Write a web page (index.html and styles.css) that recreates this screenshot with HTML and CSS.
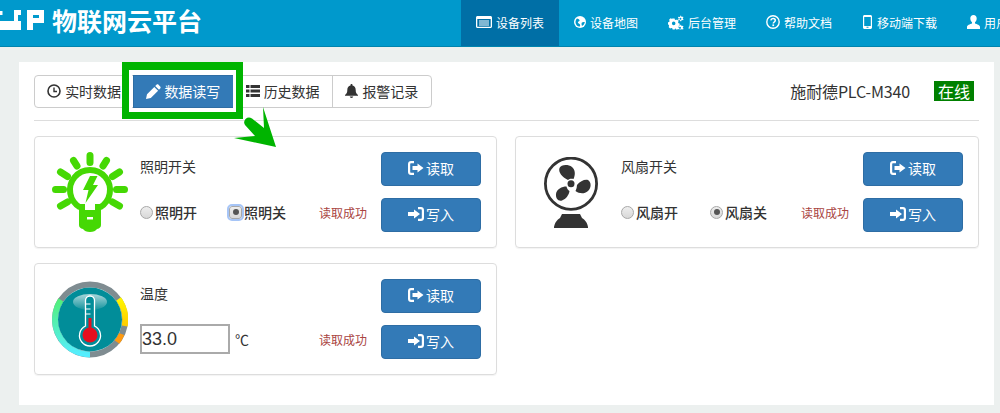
FILE: index.html
```html
<!DOCTYPE html>
<html lang="zh">
<head>
<meta charset="utf-8">
<title>物联网云平台</title>
<link rel="stylesheet" href="styles.css">
</head>
<body>
<svg class="defs" width="0" height="0" aria-hidden="true">
  <symbol id="i-read" viewBox="0 0 16 14"><path d="M6 0H3C1.300 0 0 1.300 0 3v8c0 1.700 1.300 3 3 3h3v-2.200H3.200C2.600 11.800 2.200 11.400 2.200 10.800V3.200C2.200 2.600 2.600 2.200 3.200 2.200H6zM9.500 2.500V5H4.500v4h5v2.500L15.500 7z" fill="currentColor"/></symbol>
  <symbol id="i-write" viewBox="0 0 16 14"><path d="M10 0h3c1.700 0 3 1.300 3 3v8c0 1.700-1.300 3-3 3h-3v-2.200h2.800c.6 0 1-.4 1-1V3.200c0-.6-.4-1-1-1H10zM6 2.500V5H0v4h6v2.500L12 7z" fill="currentColor"/></symbol>
</svg>
<header class="topbar">
  <div class="brand">
    <svg class="logo" width="45" height="20" viewBox="0 0 45 20"><path d="M0 1h2.500v4H0zM14 0h7v5h-3v6h3v9H0v-9h14z" fill="#fff"/><path d="M27 0h17v13H33v7h-6zM33 5v3h6V5z" fill="#fff" fill-rule="evenodd"/></svg>
    <span class="brand-name">物联网云平台</span>
  </div>
  <nav class="nav">
    <a class="nav-item active"><svg width="16" height="12" viewBox="0 0 16 12"><path fill="#fff" fill-rule="evenodd" d="M1.500 0h13C15.300 0 16 .7 16 1.500v9c0 .8-.7 1.500-1.500 1.500h-13C.7 12 0 11.300 0 10.500v-9C0 .7.700 0 1.500 0zM1.300 3v7.700h13.400V3zM3 4.500h10v1H3zM3 6.500h10v1H3zM3 8.500h10v1H3z"/></svg>设备列表</a>
    <a class="nav-item"><svg width="12" height="12" viewBox="0 0 12 12"><circle cx="6" cy="6" r="6" fill="#fff"/><path d="M3 2.500c1 .3 2 .5 2.500 1.500S4.500 5.500 4 6s.5 1.500 1.500 2 .5 2 .5 2.500C4 11 1.700 9 1.500 6.500 1.400 5 2 3.500 3 2.500zM8 6.500c1-.5 2-.5 2.800-.5-.2 1.800-1.300 3.300-2.800 4C7.500 9 7.300 7 8 6.500z" fill="#0099cc"/></svg>设备地图</a>
    <a class="nav-item"><svg width="16" height="15" viewBox="0 0 18 16"><path fill="#fff" fill-rule="evenodd" d="M5 3.500h2.400l.4 1.300 1.200.5 1.200-.6 1.700 1.700-.6 1.200.5 1.200 1.300.4v2.400l-1.300.4-.5 1.200.6 1.200-1.700 1.700-1.200-.6L8 14.600l-.4 1.300H5.200l-.4-1.300-1.200-.5-1.200.6L.7 13l.6-1.200-.5-1.200L0 10.200V7.800l1.300-.4.5-1.200-.6-1.200 1.700-1.700 1.200.6 1.200-.5zM6.400 7a2 2 0 1 0 0 4 2 2 0 0 0 0-4zM14 .2l.7.1.3 1 .8.4 1-.4.6.9-.7.8v.9l.8.7-.6.9-1-.3-.7.4-.3 1.100h-1l-.3-1-.8-.4-1 .4-.5-.9.7-.8v-.9l-.8-.7.6-.9 1 .3.8-.4zM14 2.700a1.100 1.100 0 1 0 0 2.200 1.100 1.100 0 0 0 0-2.200zM14 10.500l.7.1.3 1 .8.4 1-.4.6.9-.7.8v.9l.8.7-.6.9-1-.3-.7.2-.3.3h-1l-.3-.3-.8-.2-1 .1-.5-.7.7-.8v-.9l-.8-.7.6-.9 1 .3.8-.4zM14 13a1.100 1.100 0 1 0 0 2 1.100 1.100 0 0 0 0-2z"/></svg>后台管理</a>
    <a class="nav-item"><svg width="14" height="14" viewBox="0 0 14 14"><circle cx="7" cy="7" r="6.200" fill="none" stroke="#fff" stroke-width="1.400"/><path d="M4.800 5.300C5 4 6 3.400 7.100 3.400c1.300 0 2.200.8 2.200 1.900 0 1.700-2 1.700-2 3.300" fill="none" stroke="#fff" stroke-width="1.500"/><rect x="6.400" y="9.400" width="1.700" height="1.700" fill="#fff"/></svg>帮助文档</a>
    <a class="nav-item"><svg width="11" height="14" viewBox="0 0 9 14"><path fill="#fff" fill-rule="evenodd" d="M1.500 0h6C8.300 0 9 .7 9 1.500v11c0 .8-.7 1.500-1.500 1.500h-6C.7 14 0 13.300 0 12.500v-11C0 .7.700 0 1.500 0zM1.200 2v9h6.600V2zM3.500 11.700v1h2v-1z"/></svg>移动端下载</a>
    <a class="nav-item"><svg width="13" height="14" viewBox="0 0 13 14"><path fill="#fff" d="M6.500 0C8.500 0 9.700 1.500 9.700 3.500c0 1.500-.7 3-1.700 3.700v1.300c2 .8 5 1.300 5 3.500V14H0v-2c0-2.200 3-2.700 5-3.500V7.200C4 6.500 3.300 5 3.300 3.500 3.300 1.500 4.500 0 6.500 0z"/></svg>用户中心</a>
  </nav>
</header>

<main class="page">
  <section class="panel">
    <div class="toolbar">
      <div class="tabs">
        <a class="tab"><svg width="14" height="14" viewBox="0 0 14 14"><circle cx="7" cy="7" r="6" fill="none" stroke="#333" stroke-width="1.600"/><path d="M7 3.500V7.500H10" fill="none" stroke="#333" stroke-width="1.400"/></svg>实时数据</a>
        <a class="tab current"><svg width="15" height="15" viewBox="0 0 15 15"><path fill="#fff" d="M10.500.8c.6-.6 1.500-.6 2 0l1.700 1.700c.6.500.6 1.400 0 2L13 5.800 9.200 2zM8.300 2.900l3.800 3.800-7.300 7.300L0 15l1-4.800z"/></svg>数据读写</a>
        <a class="tab"><svg width="14" height="12" viewBox="0 0 14 12"><path fill="#333" d="M0 0h3.500v3H0zM4.500 0H14v3H4.500zM0 4.500h3.500v3H0zM4.500 4.500H14v3H4.500zM0 9h3.500v3H0zM4.500 9H14v3H4.500z"/></svg>历史数据</a>
        <a class="tab"><svg width="13" height="14" viewBox="0 0 13 14"><path fill="#333" d="M6.500 0c.6 0 1 .4 1 1v.6c2 .5 3.200 2.100 3.200 4.300 0 2.700.7 3.600 2.300 5.100v.8H0V11c1.600-1.500 2.300-2.400 2.300-5.100 0-2.200 1.200-3.800 3.200-4.300V1c0-.6.4-1 1-1zM4.800 12.600h3.400c0 .8-.8 1.400-1.700 1.400s-1.700-.6-1.700-1.400z"/></svg>报警记录</a>
      </div>
      <div class="device">
        <span class="device-name">施耐德PLC-M340</span>
        <span class="badge">在线</span>
      </div>
    </div>

    <div class="cards">
      <article class="card">
        <div class="card-icon">
          <svg width="76" height="80" viewBox="0 0 76 80">
            <g fill="none" stroke="#45d804" stroke-width="7" stroke-linecap="round">
              <path d="M38 3.500v7M21.500 8.500l3.500 5.500M54.500 8.500L51 14M8.500 20l7 4.500M67.500 20l-7 4.500M3.500 37.500h8M72.500 37.500h-8M8.500 54l7-4M67.500 54l-7-4"/>
            </g>
            <path d="M28 55.300A20 20 0 1 1 48 55.300" fill="none" stroke="#45d804" stroke-width="6"/>
            <path fill="#45d804" d="M38 24H45.500L41 33H46L33.500 51 36.500 38H31z"/>
            <path fill="#45d804" fill-rule="evenodd" d="M27 52h6v6h10v-6h6v21q0 3-4 4-2 3-7 3t-7-3q-4-1-4-4zM35 65v2.500h6V65z"/>
          </svg>
        </div>
        <div class="card-body">
          <h3 class="card-title">照明开关</h3>
          <div class="card-row">
            <label class="radio"><span class="dot"></span>照明开</label>
            <label class="radio"><span class="dot on focus"></span>照明关</label>
            <span class="status">读取成功</span>
          </div>
        </div>
        <div class="actions">
          <button class="btn"><svg width="16" height="14"><use href="#i-read"/></svg><span>读取</span></button>
          <button class="btn"><svg width="16" height="14"><use href="#i-write"/></svg><span>写入</span></button>
        </div>
      </article>

      <article class="card">
        <div class="card-icon">
          <svg width="54" height="71" viewBox="0 0 54 71">
            <circle cx="27" cy="26.700" r="25.600" fill="none" stroke="#333" stroke-width="2.800"/>
            <circle cx="27" cy="26.700" r="3.500" fill="#333"/>
            <path fill="#333" d="M24 23C18 20 14 15 15.500 11 17 7.500 24 7 28 10c3.500 3 3.500 8 1.500 12-2-.5-4-.5-5.500 1zM33 28c3-4 8-6 11-5 3.500 2 3.500 8 0 11-4 3.500-9 2.500-12.500 0 1-2 1.500-4 1.500-6zM22.500 29.500c.5 2 1.500 3.500 3 4.500-.5 4-3.500 8-7.500 9.500-4 1-6.500-2.500-6-6.500.5-5 6-7.500 10.500-7.500z"/>
            <path fill="#333" d="M18 57H36L38 61C41 63 43 65 44 70V71H10V70C11 65 13 63 16 61z"/>
          </svg>
        </div>
        <div class="card-body">
          <h3 class="card-title">风扇开关</h3>
          <div class="card-row">
            <label class="radio"><span class="dot"></span>风扇开</label>
            <label class="radio"><span class="dot on"></span>风扇关</label>
            <span class="status">读取成功</span>
          </div>
        </div>
        <div class="actions">
          <button class="btn"><svg width="16" height="14"><use href="#i-read"/></svg><span>读取</span></button>
          <button class="btn"><svg width="16" height="14"><use href="#i-write"/></svg><span>写入</span></button>
        </div>
      </article>

      <article class="card">
        <div class="card-icon">
          <svg width="76" height="77" viewBox="0 0 76 77">
            <defs>
              <linearGradient id="g-left" x1="0" y1="0" x2="0" y2="1"><stop offset="0" stop-color="#52f07a"/><stop offset="1" stop-color="#55eeff"/></linearGradient>
              <linearGradient id="g-right" x1="0" y1="0" x2="0" y2="1"><stop offset="0" stop-color="#fff600"/><stop offset="1" stop-color="#ffcc00"/></linearGradient>
              <linearGradient id="g-sheen" x1="0" y1="0" x2="0" y2="1"><stop offset="0" stop-color="#a9d6da"/><stop offset="1" stop-color="#12939d"/></linearGradient>
            </defs>
            <circle cx="38" cy="38.500" r="35" fill="none" stroke="#7f8c91" stroke-width="6"/>
            <path d="M9 19A35 35 0 0 0 38 73.500" fill="none" stroke="url(#g-left)" stroke-width="6"/>
            <path d="M66.500 18a35 35 0 0 1 6.200 27" fill="none" stroke="url(#g-right)" stroke-width="6"/>
            <path d="M69.500 53a35 35 0 0 1-4.500 8" fill="none" stroke="#ff9a10" stroke-width="6"/>
            <circle cx="38" cy="38.500" r="32" fill="#018d99"/>
            <ellipse cx="38" cy="21" rx="17" ry="8" fill="url(#g-sheen)"/>
            <path d="M33.500 45V19.500a4.500 4.500 0 0 1 9 0V45a10.500 10.500 0 1 1-9 0z" fill="#018d99" stroke="#fff" stroke-width="1.300"/>
            <path d="M36.500 37h3v13h-3z" fill="#e60f1e"/>
            <circle cx="38" cy="54" r="7.500" fill="#e60f1e"/>
            <path d="M33.500 23h5M33.500 28h5M33.500 33h5" stroke="#fff" stroke-width="1.200"/>
          </svg>
        </div>
        <div class="card-body">
          <h3 class="card-title">温度</h3>
          <div class="card-row">
            <input class="value" value="33.0">
            <span class="unit">℃</span>
            <span class="status">读取成功</span>
          </div>
        </div>
        <div class="actions">
          <button class="btn"><svg width="16" height="14"><use href="#i-read"/></svg><span>读取</span></button>
          <button class="btn"><svg width="16" height="14"><use href="#i-write"/></svg><span>写入</span></button>
        </div>
      </article>
    </div>
  </section>
</main>

<div class="callout-box"></div>
<svg class="callout-arrow" width="43" height="41" viewBox="0 0 43 41">
  <path fill="#00b400" d="M29 0 42 40 0 31 21 29 11 18Q9 15 11.500 12 14.500 9.500 18 11.500L30 21Z"/>
</svg>
</body>
</html>
```

FILE: styles.css
```css
* { box-sizing: border-box; }
html, body { margin: 0; height: 413px; overflow: hidden; }
body {
  position: relative;
  background: #ecf0ef;
  color: #333;
  font-family: "Noto Sans CJK SC", "Liberation Sans", sans-serif;
  font-size: 14px;
}
.defs { position: absolute; }

.topbar {
  display: flex;
  height: 47px;
  background: #0099cc;
  border-bottom: 1px solid #0084ad;
  overflow: hidden;
}
.brand { display: flex; align-items: center; width: 461px; flex: none; }
.logo { flex: none; margin-right: 7px; margin-bottom: 6px; }
.brand-name { color: #fff; font-size: 25px; font-weight: 700; line-height: 1; white-space: nowrap; margin-bottom: 5px; }
.nav { display: flex; flex: none; }
.nav-item {
  display: flex;
  align-items: center;
  gap: 4px;
  padding: 0 15px 2px;
  color: #fff;
  font-size: 12px;
  white-space: nowrap;
}
.nav-item.active { background: #006fa6; }

.page { padding: 15px 6px 8px 19px; height: 366px; }
.panel { background: #fff; height: 343px; padding: 13px 15px 0; }
.toolbar {
  display: flex;
  justify-content: space-between;
  align-items: center;
  height: 46px;
  padding-bottom: 13px;
  border-bottom: 1px solid #ddd;
}
.tabs { display: flex; }
.tab {
  display: flex;
  align-items: center;
  justify-content: center;
  gap: 4px;
  width: 100.250px;
  height: 33px;
  border: 1px solid #ccc;
  margin-left: -1px;
  color: #333;
  font-size: 14px;
}
.tab:first-child { margin-left: 0; border-radius: 4px 0 0 4px; }
.tab:last-child { border-radius: 0 4px 4px 0; }
.tab.current { background: #337ab7; border-color: #2e6da4; color: #fff; position: relative; gap: 3px; }

.device { display: flex; align-items: center; gap: 24px; padding-right: 5px; }
.device-name { font-size: 16px; letter-spacing: -0.150px; }
.badge { background: #008000; color: #fff; font-size: 16px; line-height: 20px; padding: 0 4px; }

.cards {
  display: grid;
  grid-template-columns: 463px 464px;
  column-gap: 18px;
  row-gap: 15px;
  margin-top: 15px;
}
.card {
  display: flex;
  height: 112px;
  border: 1px solid #ddd;
  border-radius: 4px;
  padding: 15px 15px 15px 0;
  box-shadow: 0 1px 1px rgba(0,0,0,.05);
}
.card-icon { width: 105px; flex: none; display: flex; justify-content: center; align-items: center; padding-left: 5px; }
.card-body { flex: 1; min-width: 0; display: flex; flex-direction: column; justify-content: space-between; padding-bottom: 5px; }
.card-title { margin: 4px 0 0; font-size: 14px; font-weight: 400; line-height: 20px; }
.card-row { display: flex; align-items: center; height: 30px; }
.radio { display: flex; align-items: center; gap: 2px; width: 89px; font-size: 14px; font-weight: 500; }
.dot {
  width: 13px; height: 13px; border-radius: 50%;
  border: 1px solid #a8a8a8;
  background: linear-gradient(#eee, #d8d8d8);
  flex: none;
  position: relative;
}
.dot.on::after {
  content: ""; position: absolute; left: 2.500px; top: 2.500px;
  width: 6px; height: 6px; border-radius: 50%; background: #555;
}
.dot.focus { outline: 2px solid #a6c5f7; outline-offset: 0; border-radius: 3px; }
.status { margin-left: auto; margin-right: 14px; font-size: 12px; color: #a94442; white-space: nowrap; }
.value {
  width: 90px; height: 30px; padding: 0; border: 2px solid #aaa;
  font-family: "Liberation Sans", sans-serif; font-size: 18px; color: #333;
}
.unit { margin-left: 5px; font-size: 14px; }
.actions { display: flex; flex-direction: column; gap: 12px; flex: none; }
.btn {
  display: flex; align-items: center; justify-content: center; gap: 2px;
  width: 100px; height: 34px;
  background: #337ab7; border: 1px solid #2e6da4; border-radius: 4px;
  color: #fff; font-family: inherit; font-size: 14px; padding: 0 0 2px;
}

.callout-box {
  position: absolute; left: 122px; top: 62px; width: 121px; height: 57px;
  border: solid #00b400;
  border-width: 8px 7px 7px;
}
.callout-box::after {
  content: ""; position: absolute; inset: 0; border: 3px solid #fff;
}
.callout-arrow { position: absolute; left: 234px; top: 107px; }
```
